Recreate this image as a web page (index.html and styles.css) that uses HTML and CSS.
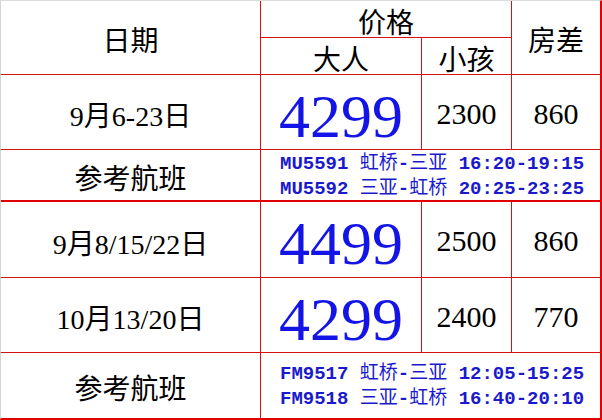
FILE: index.html
```html
<!DOCTYPE html>
<html lang="zh">
<head>
<meta charset="utf-8">
<title>价格表</title>
<link rel="stylesheet" href="styles.css">
</head>
<body>
<div class="sheet">
  <div class="cell head c1 r12">日期</div>
  <div class="cell head c23 r1">价格</div>
  <div class="cell head c4 r12 last">房差</div>
  <div class="cell head c2 r2">大人</div>
  <div class="cell head c3 r2">小孩</div>

  <div class="cell date">9月6-23日</div>
  <div class="cell big">4299</div>
  <div class="cell num">2300</div>
  <div class="cell num last">860</div>

  <div class="cell head thick">参考航班</div>
  <div class="cell flights thick span3 last">
    <div>MU5591 <span class="cjk">虹桥</span>-<span class="cjk">三亚</span> 16:20-19:15</div>
    <div>MU5592 <span class="cjk">三亚</span>-<span class="cjk">虹桥</span> 20:25-23:25</div>
  </div>

  <div class="cell date">9月8/15/22日</div>
  <div class="cell big">4499</div>
  <div class="cell num">2500</div>
  <div class="cell num last">860</div>

  <div class="cell date">10月13/20日</div>
  <div class="cell big">4299</div>
  <div class="cell num">2400</div>
  <div class="cell num last">770</div>

  <div class="cell head bottom">参考航班</div>
  <div class="cell flights span3 last bottom">
    <div>FM9517 <span class="cjk">虹桥</span>-<span class="cjk">三亚</span> 12:05-15:25</div>
    <div>FM9518 <span class="cjk">三亚</span>-<span class="cjk">虹桥</span> 16:40-20:10</div>
  </div>
</div>
</body>
</html>
```
FILE: styles.css
```css
html, body {
  margin: 0;
  padding: 0;
  background: #ffffff;
}
.sheet {
  width: 599px;
  height: 417px;
  display: grid;
  grid-template-columns: 260px 161px 90px 88px;
  grid-template-rows: 37px 37px 75px 52px 76px 75px 65px;
  border-left: 1px solid #d4d4d4;
  border-top: 1px solid #dcdcdc;
  border-right: 2px solid #e00000;
  border-bottom: 2px solid #e00000;
  font-family: "Liberation Serif", "Noto Sans CJK SC", serif;
  color: #000000;
}
.cell {
  box-sizing: border-box;
  border-right: 1px solid #d81010;
  border-bottom: 1px solid #d81010;
  display: flex;
  align-items: center;
  justify-content: center;
  white-space: nowrap;
}
.cell.last { border-right: none; }
.cell.bottom { border-bottom: none; }
.cell.thick { border-bottom: 2px solid #e00000; }
.c1 { grid-column: 1; }
.c23 { grid-column: 2 / 4; }
.c2 { grid-column: 2; }
.c3 { grid-column: 3; }
.c4 { grid-column: 4; }
.r12 { grid-row: 1 / 3; }
.r1 { grid-row: 1; }
.r2 { grid-row: 2; }
.span3 { grid-column: 2 / 5; }
.head {
  font-family: "Noto Sans CJK SC", sans-serif;
  font-size: 28px;
  line-height: 1;
  padding-top: 3px;
}
.date {
  font-size: 28px;
  padding-top: 4px;
}
.big {
  font-size: 62px;
  color: #1414e6;
  padding-top: 8px;
}
.num {
  font-size: 30px;
  padding-top: 3px;
}
.flights {
  flex-direction: column;
  align-items: flex-start;
  justify-content: center;
  padding-left: 19px;
  padding-top: 3px;
  font-family: "Liberation Mono", "Noto Sans CJK SC", monospace;
  font-size: 19px;
  line-height: 25px;
  color: #1a1acc;
  font-weight: bold;
}
.cjk {
  font-weight: normal;
}
```
